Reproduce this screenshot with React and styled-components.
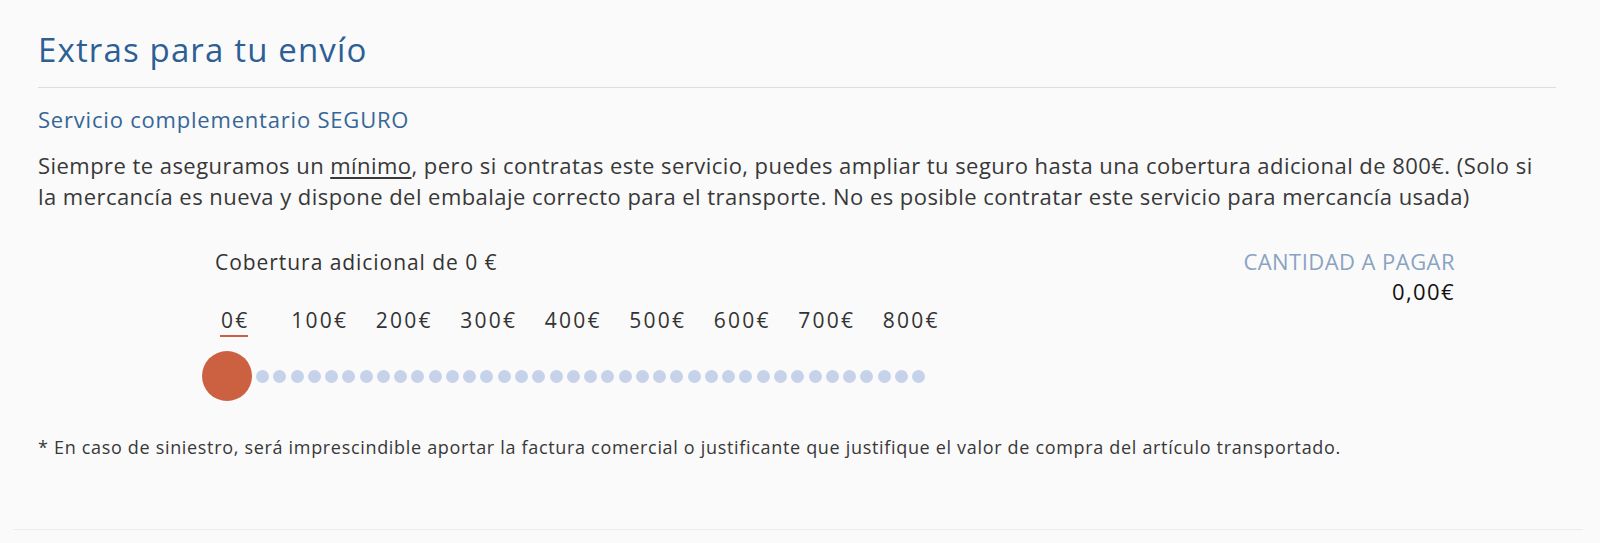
import React from 'react';
import styled, {createGlobalStyle} from 'styled-components';

const GlobalStyle = createGlobalStyle`
  html, body {
    margin: 0;
    padding: 0;
    background: #fafafa;
  }
  body {
    font-family: 'Open Sans', 'Noto Sans', sans-serif;
    color: #333333;
  }
`;

const Page = styled.div`
  padding: 0 17px 0 13px;
`;

const Section = styled.section`
  padding: 30px 27px 70px 25px;
  border-bottom: 1px solid #ececec;
`;

const Title = styled.h1`
  margin: 0;
  padding-bottom: 17px;
  border-bottom: 1px solid #dedede;
  font-size: 33px;
  line-height: 40px;
  letter-spacing: 1.15px;
  font-weight: 400;
  color: #2d5f95;
`;

const Subtitle = styled.h2`
  margin: 17px 0 0;
  font-size: 22px;
  line-height: 28px;
  letter-spacing: 0.8px;
  font-weight: 400;
  color: #356697;
`;

const Text = styled.p`
  margin: 17px 0 0;
  max-width: 1512px;
  font-size: 22px;
  line-height: 31px;
  letter-spacing: 0.45px;
  color: #383838;
`;

const Underlined = styled.span`
  text-decoration: underline;
  text-underline-offset: 3px;
`;

const Coverage = styled.div`
  display: flex;
  justify-content: space-between;
  margin: 35px 101px 0 164px;
`;

const Controls = styled.div`
  display: flex;
  flex-direction: column;
  padding-top: 2px;
`;

const Label = styled.div`
  margin-left: 13px;
  font-size: 21px;
  line-height: 26px;
  letter-spacing: 0.95px;
`;

const Ticks = styled.div`
  display: grid;
  grid-template-columns: repeat(9, 84.5px);
  margin: 32px 0 0 -9px;
`;

const Tick = styled.span`
  justify-self: center;
  position: relative;
  font-size: 21px;
  line-height: 26px;
  letter-spacing: 2.2px;
  color: #333333;

  &::after {
    content: '';
    display: ${p => p.active ? 'block' : 'none'};
    position: absolute;
    left: -1px;
    right: 1px;
    bottom: -4px;
    height: 2px;
    background: #cc6141;
  }
`;

const Track = styled.div`
  position: relative;
  width: 724px;
  height: 50px;
  margin-top: 18px;
  display: flex;
  align-items: center;
`;

const Dots = styled.div`
  display: flex;
  justify-content: space-between;
  width: 704px;
  margin-left: 19.5px;
`;

const Dot = styled.span`
  width: 13px;
  height: 13px;
  border-radius: 50%;
  background: #c6d2ea;
`;

const Thumb = styled.span`
  position: absolute;
  left: 0;
  top: 0;
  width: 50px;
  height: 50px;
  border-radius: 50%;
  background: #cc6141;
`;

const Total = styled.div`
  display: flex;
  flex-direction: column;
  align-items: flex-end;
  margin-top: -1px;
`;

const TotalLabel = styled.div`
  font-size: 22px;
  line-height: 30px;
  letter-spacing: 0.45px;
  color: #8aa3c2;
`;

const TotalValue = styled.div`
  font-size: 22px;
  line-height: 30px;
  letter-spacing: 1.4px;
  color: #111111;
`;

const Note = styled.p`
  margin: 34px 0 0;
  font-size: 18px;
  line-height: 24px;
  letter-spacing: 0.68px;
  color: #383838;
`;

const ticks = [0, 100, 200, 300, 400, 500, 600, 700, 800];
const steps = Array.from({length: 41}, (_, i) => i * 20);

export default function App() {
	const value = 0;
	
	return (
		<Page>
			<GlobalStyle/>
			<Section>
				<Title>Extras para tu envío</Title>
				<Subtitle>Servicio complementario SEGURO</Subtitle>
				<Text>
					Siempre te aseguramos un <Underlined>mínimo</Underlined>, pero si contratas este servicio, puedes
					ampliar tu seguro hasta una cobertura adicional de 800€. (Solo si la mercancía es nueva y dispone
					del embalaje correcto para el transporte. No es posible contratar este servicio para mercancía usada)
				</Text>
				
				<Coverage>
					<Controls>
						<Label>Cobertura adicional de {value} €</Label>
						<Ticks>
							{ticks.map(t => (
								<Tick key={t} active={t === value}>{t}€</Tick>
							))}
						</Ticks>
						<Track>
							<Dots>
								{steps.map(s => <Dot key={s}/>)}
							</Dots>
							<Thumb/>
						</Track>
					</Controls>
					
					<Total>
						<TotalLabel>CANTIDAD A PAGAR</TotalLabel>
						<TotalValue>0,00€</TotalValue>
					</Total>
				</Coverage>
				
				<Note>
					* En caso de siniestro, será imprescindible aportar la factura comercial o justificante que
					justifique el valor de compra del artículo transportado.
				</Note>
			</Section>
		</Page>
	);
}
